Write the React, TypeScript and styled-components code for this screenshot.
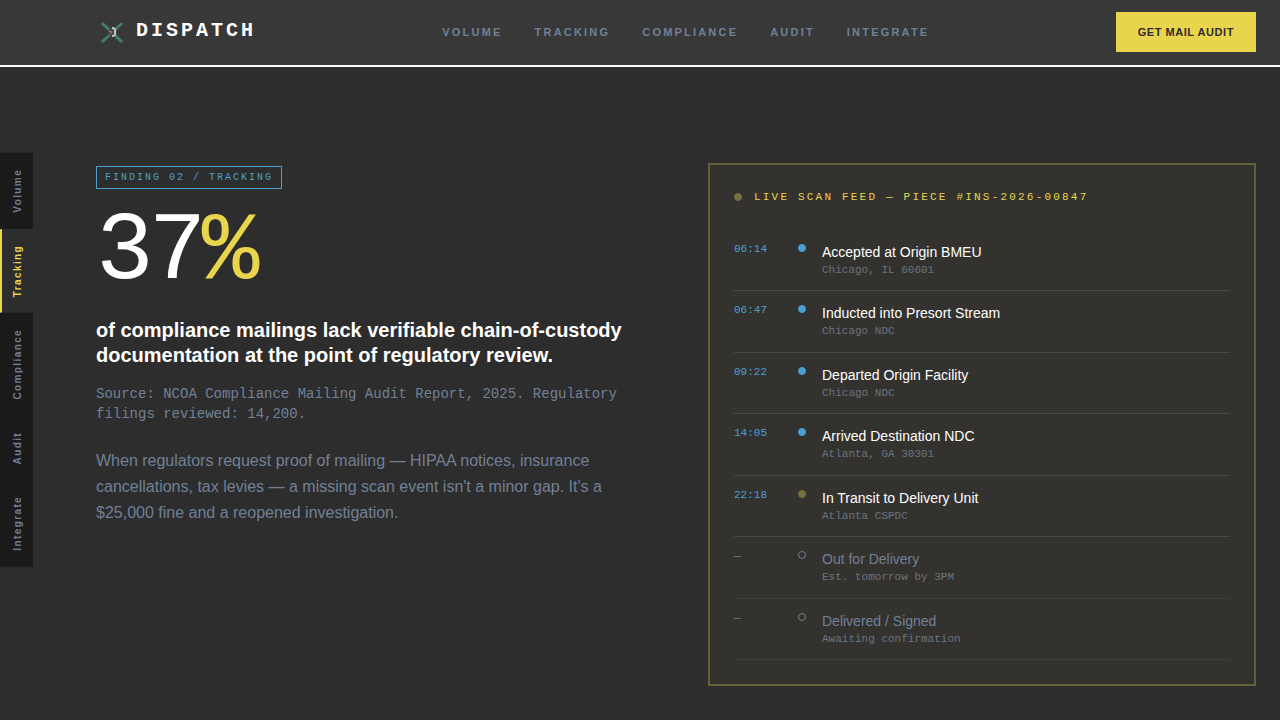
import React from 'react';
import styled, { createGlobalStyle } from 'styled-components';

const color = {
  page: '#2d2d2d',
  bar: '#383838',
  rail: '#1a1a1a',
  panel: '#34322e',
  panelEdge: '#636139',
  yellow: '#e8d44d',
  olive: '#75723f',
  blue: '#4a9fd4',
  muted: '#718096',
  white: '#ffffff',
};

const sans = `'Liberation Sans', Arial, sans-serif`;
const mono = `'Liberation Mono', 'Courier New', monospace`;

const GlobalStyle = createGlobalStyle`
  *, *::before, *::after { box-sizing: border-box; }
  body {
    margin: 0;
    background: ${color.page};
    color: ${color.white};
    font-family: ${sans};
    overflow-x: hidden;
  }
  #root { min-height: 100vh; }
  h1, h2, p, ol { margin: 0; padding: 0; }
`;

const Header = styled.header`
  display: flex;
  align-items: center;
  justify-content: space-between;
  padding: 12px 24px 13px 96px;
  background: ${color.bar};
  border-bottom: 2px solid #f7fafc;
`;

const Brand = styled.a`
  display: flex;
  align-items: center;
  gap: 8px;
  color: ${color.white};
  font: bold 20px/24px ${mono};
  letter-spacing: 0.15em;
  text-decoration: none;
`;

const BrandName = styled.span`
  padding-bottom: 2px;
`;

const TopNav = styled.nav`
  display: flex;
  gap: 32px;
`;

const TopLink = styled.a`
  color: ${color.muted};
  font: bold 11px/16px ${sans};
  letter-spacing: 0.2em;
  text-decoration: none;
  text-transform: uppercase;
`;

const AuditButton = styled.button`
  height: 40px;
  padding: 0 22px;
  border: 0;
  background: ${color.yellow};
  color: ${color.page};
  font: bold 11px/16px ${sans};
  letter-spacing: 0.05em;
  text-transform: uppercase;
  cursor: pointer;
`;

const SideRail = styled.nav`
  position: fixed;
  left: 0;
  top: 50%;
  transform: translateY(-50%);
  display: flex;
  flex-direction: column;
  z-index: 10;
`;

const RailLink = styled.a<{ $active: boolean }>`
  writing-mode: vertical-rl;
  transform: rotate(180deg);
  padding: 16px 10px;
  border-right: 2px solid ${p => (p.$active ? color.yellow : 'transparent')};
  background: ${p => (p.$active ? color.page : color.rail)};
  background-clip: border-box;
  color: ${p => (p.$active ? color.yellow : color.muted)};
  font: bold 10px/11px ${sans};
  letter-spacing: 0.14em;
  text-decoration: none;
`;

const Hero = styled.main`
  display: grid;
  grid-template-columns: 1fr 1fr;
  align-items: start;
  gap: 64px;
  padding: 96px 24px 34px 96px;
`;

const Finding = styled.section`
  display: flex;
  flex-direction: column;
  align-items: flex-start;
  padding-top: 3px;
`;

const Tag = styled.span`
  padding: 3px 8px;
  border: 1px solid ${color.blue};
  color: ${color.blue};
  font: 10px/15px ${mono};
  letter-spacing: 0.2em;
`;

const Figure = styled.h1`
  margin-top: 16px;
  font: normal 96px/96px ${mono};
  letter-spacing: -0.05em;
`;

const Percent = styled.span`
  color: ${color.yellow};
`;

const Claim = styled.h2`
  margin-top: 17px;
  font: bold 20px/25px ${sans};
`;

const Source = styled.p`
  margin-top: 16px;
  color: ${color.muted};
  font: 14px/20px ${mono};
`;

const Detail = styled.p`
  margin-top: 24px;
  color: ${color.muted};
  font: 16px/26px ${sans};
`;

const Feed = styled.section`
  padding: 24px;
  border: 2px solid ${color.panelEdge};
  background: ${color.panel};
`;

const FeedTitle = styled.h2`
  display: flex;
  align-items: center;
  gap: 12px;
  margin-bottom: 24px;
  color: ${color.yellow};
  font: normal 11px/1.5 ${mono};
  letter-spacing: 0.2em;
`;

type Status = 'done' | 'current' | 'pending';

const Dot = styled.span<{ $status: Status }>`
  flex: none;
  width: 8px;
  height: 8px;
  border-radius: 50%;
  border: 1px solid
    ${p => ({ done: color.blue, current: color.olive, pending: color.muted })[p.$status]};
  background: ${p => ({ done: color.blue, current: color.olive, pending: 'transparent' })[p.$status]};
`;

const ScanList = styled.ol`
  list-style: none;
`;

const ScanRow = styled.li<{ $status: Status }>`
  display: grid;
  grid-template-columns: 48px 8px 1fr;
  column-gap: 16px;
  padding: 12px 0;
  border-bottom: 1px solid ${p => (p.$status === 'pending' ? '#3e3d3a' : '#494845')};

  ${Dot} {
    margin-top: 2px;
  }
`;

const ScanTime = styled.time<{ $status: Status }>`
  color: ${p => (p.$status === 'pending' ? color.muted : color.blue)};
  font: 11px/15px ${mono};
`;

const ScanEvent = styled.p<{ $status: Status }>`
  color: ${p => (p.$status === 'pending' ? color.muted : color.white)};
  font: 14px/20px ${sans};
`;

const ScanPlace = styled.p`
  color: #6b7280;
  font: 11px/1.5 ${mono};
`;

const topics = ['Volume', 'Tracking', 'Compliance', 'Audit', 'Integrate'];

const scans: { time: string; event: string; place: string; status: Status }[] = [
  { time: '06:14', event: 'Accepted at Origin BMEU', place: 'Chicago, IL 60601', status: 'done' },
  { time: '06:47', event: 'Inducted into Presort Stream', place: 'Chicago NDC', status: 'done' },
  { time: '09:22', event: 'Departed Origin Facility', place: 'Chicago NDC', status: 'done' },
  { time: '14:05', event: 'Arrived Destination NDC', place: 'Atlanta, GA 30301', status: 'done' },
  { time: '22:18', event: 'In Transit to Delivery Unit', place: 'Atlanta CSPDC', status: 'current' },
  { time: '—', event: 'Out for Delivery', place: 'Est. tomorrow by 3PM', status: 'pending' },
  { time: '—', event: 'Delivered / Signed', place: 'Awaiting confirmation', status: 'pending' },
];

function BrandMark() {
  return (
    <svg width="32" height="32" viewBox="0 0 32 32" aria-hidden="true">
      <g stroke="#457f70" strokeWidth="3">
        <path d="M6 7 L26 26" />
        <path d="M26 7 L6 26" />
      </g>
      <g stroke="#2c4a42" strokeWidth="1">
        <path d="M5 9 L24 27" />
        <path d="M25 6 L8 22" />
      </g>
      <circle cx="16" cy="16" r="4" fill="#4b4745" />
      <path d="M16 12 Q20 12 19 16 Q20 20 16 20" fill="none" stroke="#c9c9c4" strokeWidth="2" />
      <path d="M13 15 L16 16 L14 18" fill="none" stroke="#9a908c" strokeWidth="1" />
    </svg>
  );
}

export default function App() {
  return (
    <>
      <GlobalStyle />
      <Header>
        <Brand href="#">
          <BrandMark />
          <BrandName>DISPATCH</BrandName>
        </Brand>
        <TopNav aria-label="Main">
          {topics.map(t => (
            <TopLink key={t} href={`#${t.toLowerCase()}`}>{t}</TopLink>
          ))}
        </TopNav>
        <AuditButton type="button">Get Mail Audit</AuditButton>
      </Header>
      <SideRail aria-label="Sections">
        {topics.map(t => (
          <RailLink key={t} href={`#${t.toLowerCase()}`} $active={t === 'Tracking'}>{t}</RailLink>
        ))}
      </SideRail>
      <Hero>
        <Finding>
          <Tag>FINDING 02 / TRACKING</Tag>
          <Figure>37<Percent>%</Percent></Figure>
          <Claim>
            of compliance mailings lack verifiable chain-of-custody documentation at the point of
            regulatory review.
          </Claim>
          <Source>
            Source: NCOA Compliance Mailing Audit Report, 2025. Regulatory filings reviewed: 14,200.
          </Source>
          <Detail>
            When regulators request proof of mailing — HIPAA notices, insurance cancellations, tax
            levies — a missing scan event isn't a minor gap. It's a $25,000 fine and a reopened
            investigation.
          </Detail>
        </Finding>
        <Feed>
          <FeedTitle>
            <Dot $status="current" />
            LIVE SCAN FEED — PIECE #INS-2026-00847
          </FeedTitle>
          <ScanList>
            {scans.map(s => (
              <ScanRow key={s.event} $status={s.status}>
                <ScanTime $status={s.status}>{s.time}</ScanTime>
                <Dot $status={s.status} />
                <div>
                  <ScanEvent $status={s.status}>{s.event}</ScanEvent>
                  <ScanPlace>{s.place}</ScanPlace>
                </div>
              </ScanRow>
            ))}
          </ScanList>
        </Feed>
      </Hero>
    </>
  );
}
